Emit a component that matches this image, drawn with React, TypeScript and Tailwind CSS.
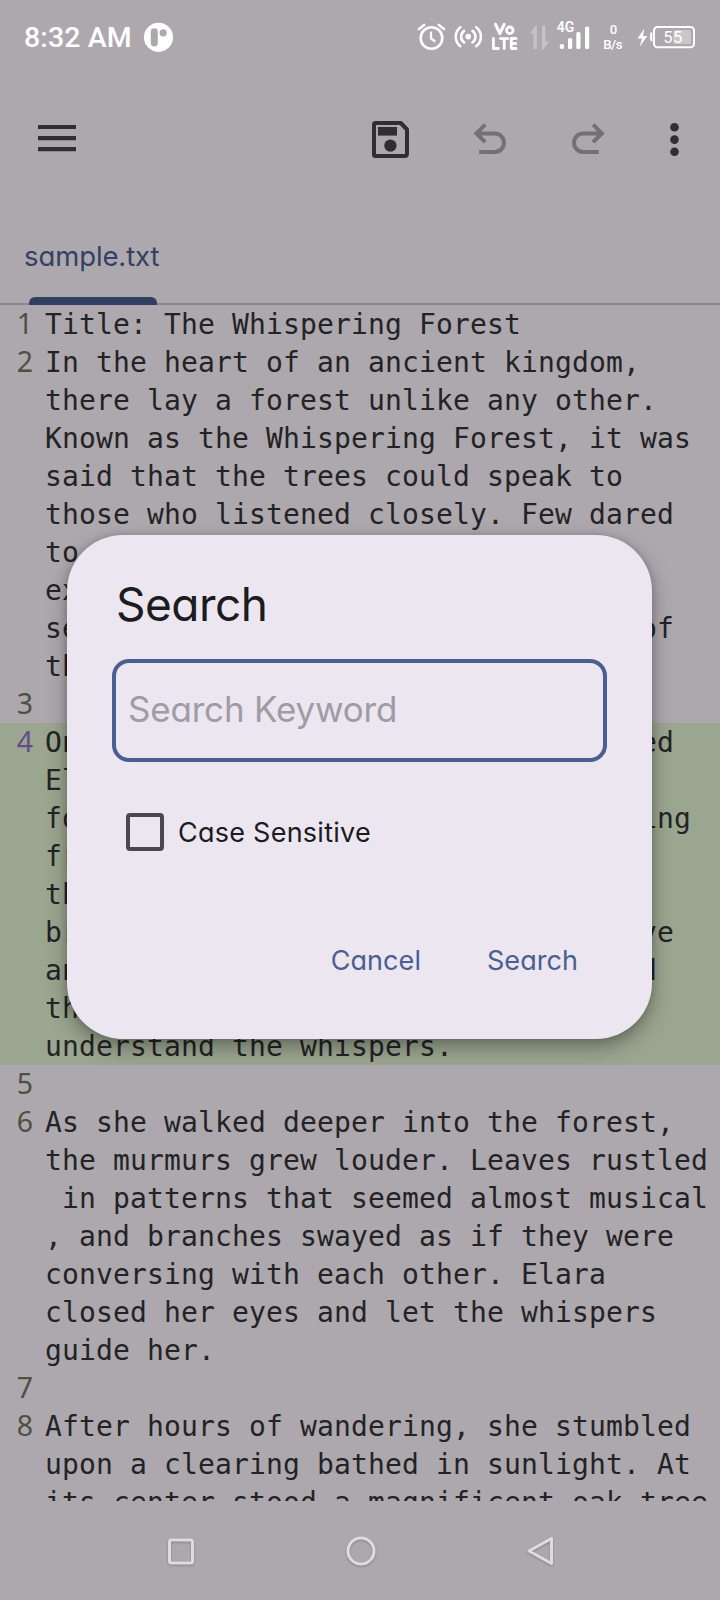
import React from "react";

type Row = { n?: number; text: string; tail?: string; width?: string; active?: boolean };

const COLS_36 = "w-[612px]";
const COLS_37 = "w-[629px]";
const COLS_38 = "w-[646px]";

const rows: Row[] = [
  { n: 1, text: "Title: The Whispering Forest" },
  { n: 2, text: "In the heart of an ancient kingdom," },
  { text: "there lay a forest unlike any other." },
  { text: "Known as the Whispering Forest, it was" },
  { text: "said that the trees could speak to" },
  { text: "those who listened closely. Few dared" },
  { text: "to" },
  { text: "ex" },
  { text: "se", tail: "of", width: COLS_37 },
  { text: "th" },
  { n: 3, text: "" },
  { n: 4, text: "On", tail: "ed", width: COLS_37, active: true },
  { text: "El", active: true },
  { text: "fo", tail: "ing", width: COLS_38, active: true },
  { text: "fr", active: true },
  { text: "th", active: true },
  { text: "br", tail: "ve", width: COLS_37, active: true },
  { text: "an", tail: "d", width: COLS_36, active: true },
  { text: "th", active: true },
  { text: "understand the whispers.", active: true },
  { n: 5, text: "" },
  { n: 6, text: "As she walked deeper into the forest," },
  { text: "the murmurs grew louder. Leaves rustled" },
  { text: " in patterns that seemed almost musical" },
  { text: ", and branches swayed as if they were" },
  { text: "conversing with each other. Elara" },
  { text: "closed her eyes and let the whispers" },
  { text: "guide her." },
  { n: 7, text: "" },
  { n: 8, text: "After hours of wandering, she stumbled" },
  { text: "upon a clearing bathed in sunlight. At" },
  { text: "its center stood a magnificent oak tree" },
];

function StatusBar() {
  return (
    <div className="flex h-[75px] shrink-0 items-start pl-6 text-white">
      <span className="w-[119px] whitespace-nowrap pt-[20px] font-['Roboto',sans-serif] text-[28.5px] font-medium leading-[36px] tracking-[0.12px]">
        8:32 AM
      </span>
      <svg width="32" height="75" viewBox="143 0 32 75">
        <circle cx="158.5" cy="37.3" r="14.6" fill="#fff" />
        <rect x="150.8" y="28.3" width="7" height="18.2" rx="3.4" fill="#ada8ad" />
        <circle cx="163.2" cy="32.8" r="3.6" fill="#ada8ad" />
      </svg>
      <svg className="ml-auto" width="34" height="75" viewBox="415 0 34 75" fill="none" stroke="#fff" strokeWidth="2.6" strokeLinecap="round">
        <circle cx="431.5" cy="38" r="10.8" />
        <path d="M431 32.5v6l3.5 2.5" strokeWidth="2.2" />
        <path d="M419 29l5.2-4M444 29l-5.2-4" />
      </svg>
      <svg width="36" height="75" viewBox="449 0 36 75" fill="none" stroke="#fff" strokeWidth="2.5" strokeLinecap="round">
        <circle cx="468.3" cy="36.6" r="2.8" fill="#fff" stroke="none" />
        <path d="M464.2 42.5a7 7 0 0 1 0-11.6M472.4 42.5a7 7 0 0 0 0-11.6M460.4 46.2a12 12 0 0 1 0-19M476.2 46.2a12 12 0 0 0 0-19" />
      </svg>
      <svg width="41" height="75" viewBox="485 0 41 75" fill="none" stroke="#fff" strokeWidth="3" strokeLinecap="round" strokeLinejoin="round">
        <path d="M495.5 24.3l4.3 9.2 4.3-9.2" />
        <circle cx="509.8" cy="30.3" r="3.3" strokeWidth="2.8" />
        <path d="M493.4 38.5v10h5M500.5 38.6h7.4M504.2 38.6v9.9M516 38.5h-4.7v10h4.7M511.3 43.5h4.4" strokeWidth="2.8" />
      </svg>
      <svg width="28" height="75" viewBox="526 0 28 75" fill="#fff">
        <path d="M536.9 49h-3.4V33.5H530l5.5-8h1.4z" opacity=".3" />
        <path d="M542 25.5h3.4v16h3.6l-5.6 8H542z" opacity=".3" />
      </svg>
      <svg width="42" height="75" viewBox="554 0 42 75" fill="#fff">
        <text x="556.8" y="32" fontFamily="Roboto, sans-serif" fontSize="14.5" fontWeight="600" textLength="17.5" lengthAdjust="spacingAndGlyphs">4G</text>
        <rect x="559.8" y="44" width="4.2" height="5" rx="1.8" />
        <rect x="568" y="38" width="4.2" height="11" rx="1.6" />
        <rect x="576.3" y="32" width="4.2" height="17" rx="1.6" />
        <rect x="585" y="26.5" width="4.2" height="22.5" rx="1.6" />
      </svg>
      <svg width="36" height="75" viewBox="596 0 36 75" fill="#fff">
        <text x="613.5" y="34.2" textAnchor="middle" fontFamily="Roboto, sans-serif" fontSize="13.2" fontWeight="500">0</text>
        <text x="603.2" y="49.2" fontFamily="Roboto, sans-serif" fontSize="13.2" fontWeight="500" textLength="19.3">B/s</text>
      </svg>
      <svg width="88" height="75" viewBox="632 0 88 75" fill="#fff">
        <path d="M644.3 28.5l-6.8 10h4.3l-2 8 7.6-10.4h-4.4z" />
        <path d="M652.3 32.2h-.6q-1.6 0-1.6 1.8v5.6q0 1.8 1.6 1.8h.6z" />
        <rect x="654" y="26.9" width="40" height="20.4" rx="3.6" fill="none" stroke="#fff" strokeWidth="2" />
        <rect x="673" y="30" width="18" height="14" rx="1.5" opacity=".35" />
        <text x="663.3" y="43" fontFamily="Roboto, sans-serif" fontSize="16.5" textLength="19">55</text>
      </svg>
    </div>
  );
}

function Toolbar() {
  return (
    <div className="flex h-[125px] shrink-0 items-start text-[#312e33]">
      <svg width="114" height="125" viewBox="0 75 114 125" fill="currentColor">
        <path d="M38 125h38v4H38zM38 136h38v4.2H38zM38 147.1h38v4.2H38z" />
      </svg>
      <svg className="ml-auto" width="60" height="125" viewBox="361 75 60 125">
        <path d="M375.5 123h25.3l6.2 6.5v24q0 2.5-2.5 2.5h-29q-1.5 0-1.5-1.5v-30q0-1.5 1.5-1.5z" fill="none" stroke="currentColor" strokeWidth="4" strokeLinejoin="round" />
        <rect x="378" y="127" width="19" height="8.6" fill="currentColor" />
        <circle cx="390.4" cy="145.6" r="6.2" fill="currentColor" />
      </svg>
      <svg width="103" height="125" viewBox="421 75 103 125" fill="none" stroke="#737076" strokeWidth="4">
        <path d="M485.2 124.7l-8.8 8.7 8.8 8.7M476.5 133.4h18.2a9.3 9.3 0 0 1 0 18.6h-15.5" />
      </svg>
      <svg width="122" height="125" viewBox="524 75 122 125" fill="none" stroke="#737076" strokeWidth="4">
        <path d="M593.1 124.7l8.8 8.7-8.8 8.7M601.8 133.4h-18.5a9.3 9.3 0 0 0 0 18.6h15.5" />
      </svg>
      <svg width="74" height="125" viewBox="646 75 74 125" fill="currentColor">
        <circle cx="674.5" cy="127.2" r="4.3" />
        <circle cx="674.5" cy="139.6" r="4.3" />
        <circle cx="674.5" cy="151.8" r="4.3" />
      </svg>
    </div>
  );
}

function Tabs() {
  return (
    <div className="flex h-[105px] shrink-0 flex-col items-start justify-between border-b-2 border-[#8b868c]">
      <span className="pl-[24px] pt-[36px] font-['Inter',sans-serif] text-[27.5px] leading-[40px] tracking-[-0.1px] text-[#334163] [font-feature-settings:'cv11']">
        sample.txt
      </span>
      <div className="-mb-[2px] ml-[29px] h-2 w-32 rounded-t-md bg-[#2f3f62]" />
    </div>
  );
}

function Editor() {
  return (
    <div className="h-[1196px] shrink-0 overflow-hidden">
      {rows.map((row, i) => (
        <div key={i} className={`flex h-[38px] items-start ${row.active ? "bg-[#9ba690]" : ""}`}>
          <span
            className={`w-[33px] shrink-0 text-right font-['Noto_Sans',sans-serif] text-[28.5px] leading-[37px] ${
              row.n === 4 ? "text-[#674c8c]" : "text-[#4f5041]"
            }`}
          >
            {row.n}
          </span>
          <div
            className={`ml-[12px] flex shrink-0 justify-between whitespace-pre font-['DejaVu_Sans_Mono',monospace] text-[28px] leading-[40px] tracking-[0.144px] text-[#232325] ${
              row.width ?? ""
            }`}
          >
            <span>{row.text}</span>
            {row.tail && <span>{row.tail}</span>}
          </div>
        </div>
      ))}
    </div>
  );
}

function NavBar() {
  return (
    <div className="flex h-[99px] shrink-0 items-center justify-center gap-[136px] pl-[3px] pt-[2px]">
      {[
        <rect key="r" x="9.5" y="10" width="23" height="23" rx="2" />,
        <circle key="c" cx="21" cy="21" r="13" />,
        <path key="p" d="M31.5 8.5v25L9 21z" />,
      ].map((shape, i) => (
        <svg
          key={i}
          width="44"
          height="44"
          viewBox="0 0 44 44"
          fill="none"
          stroke="#dedcdf"
          strokeWidth="3"
          strokeLinejoin="round"
          className="drop-shadow-[0_1px_1px_rgba(0,0,0,0.25)]"
        >
          {shape}
        </svg>
      ))}
    </div>
  );
}

function SearchDialog() {
  return (
    <div className="absolute left-[67px] top-[535px] flex h-[504px] w-[585px] flex-col rounded-[56px] bg-[#ebe6f0] px-[45px] font-['Inter',sans-serif] shadow-[0_8px_20px_rgba(0,0,0,0.34),0_0_6px_rgba(0,0,0,0.15)] [font-feature-settings:'cv11']">
      <h1 className="pl-[4px] pt-[39px] text-[46px] leading-[60px] tracking-[-0.5px] text-[#1c1b20]">Search</h1>
      <div className="mt-[25px] flex h-[103px] w-[495px] items-center rounded-[17px] border-4 border-[#4a5e91] pb-[4px] pl-[12px] text-[35px] leading-[40px] tracking-[-0.2px] text-[#a09ba5]">
        Search Keyword
      </div>
      <label className="mt-[51px] flex items-center pl-[14px]">
        <span className="h-[38px] w-[38px] rounded-[4px] border-4 border-[#4b4751]" />
        <span className="pl-[14px] pt-[2px] text-[27px] leading-[36px] tracking-[0.25px] text-[#1c1b20]">Case Sensitive</span>
      </label>
      <div className="mt-[90px] flex justify-end gap-[66px] pr-[29px] text-[27px] leading-[40px] tracking-[0.05px] text-[#4a5e91]">
        <button>Cancel</button>
        <button>Search</button>
      </div>
    </div>
  );
}

export default function App() {
  return (
    <div className="relative flex h-[1600px] w-[720px] flex-col overflow-hidden bg-[#ada8ad]">
      <StatusBar />
      <Toolbar />
      <Tabs />
      <Editor />
      <NavBar />
      <SearchDialog />
    </div>
  );
}
